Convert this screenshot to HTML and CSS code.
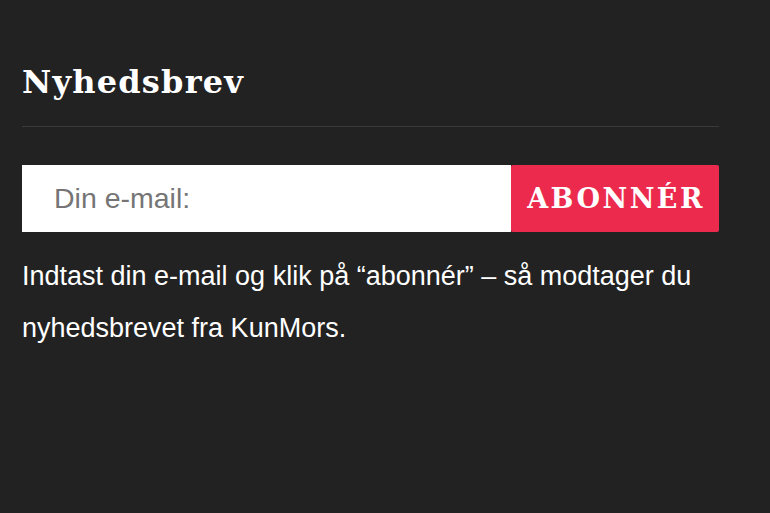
FILE: index.html
```html
<!DOCTYPE html>
<html lang="da">
<head>
    <meta charset="UTF-8">
    <meta name="viewport" content="width=device-width, initial-scale=1.0">
    <title>Nyhedsbrev</title>
    <link rel="stylesheet" href="styles.css">
</head>
<body>
    <div class="widget">
        <h2 class="widget-title">Nyhedsbrev</h2>

        <form class="newsletter" onsubmit="return false">
            <input type="email" class="newsletter-input" placeholder="Din e-mail:">
            <button type="submit" class="newsletter-button">Abonnér</button>
        </form>

        <p class="newsletter-text">Indtast din e-mail og klik på “abonnér” – så modtager du nyhedsbrevet fra KunMors.</p>
    </div>
</body>
</html>
```

FILE: styles.css
```css
body {
    margin: 0;
    background-color: #222;
    color: #fff;
    font-family: "Liberation Sans", Arial, sans-serif;
}

.widget {
    width: 697px;
    padding: 60px 0 0 22px;
}

.widget-title {
    margin: 0;
    padding-bottom: 22px;
    border-bottom: 1px solid #3a3a3a;
    font-family: "DejaVu Serif", "Liberation Serif", serif;
    font-size: 32px;
    font-weight: bold;
    letter-spacing: 1.2px;
    line-height: 44px;
}

.newsletter {
    display: flex;
    margin-top: 38px;
    height: 67px;
}

.newsletter-input {
    flex: 1;
    min-width: 0;
    margin: 0;
    border: none;
    border-radius: 0;
    padding: 0 32px;
    background-color: #fff;
    font-family: "Liberation Sans", Arial, sans-serif;
    font-size: 28.5px;
    color: #333;
    outline: none;
}

.newsletter-input::placeholder {
    color: #757575;
}

.newsletter-button {
    width: 208px;
    margin: 0;
    border: none;
    border-radius: 2px;
    padding: 0 0 0 2px;
    background-color: #ec2a4e;
    color: #fff;
    font-family: "DejaVu Serif", "Liberation Serif", serif;
    font-size: 27px;
    font-weight: bold;
    letter-spacing: 2.5px;
    text-transform: uppercase;
    cursor: pointer;
}

.newsletter-text {
    margin: 18px 0 0;
    font-size: 27px;
    line-height: 52px;
}
```
